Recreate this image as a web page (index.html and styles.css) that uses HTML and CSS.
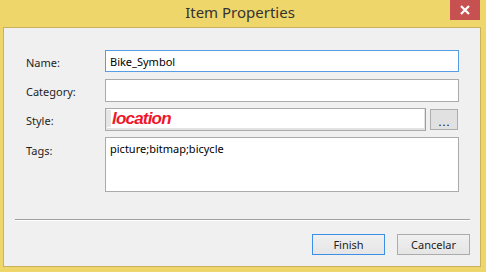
FILE: index.html
```html
<!DOCTYPE html>
<html>
<head>
<meta charset="utf-8">
<link rel="stylesheet" href="styles.css">
</head>
<body>
<div class="window">
  <div class="titlebar">
    <div class="title">Item Properties</div>
    <div class="close">
      <svg width="12" height="10" viewBox="0 0 12 10"><path d="M2 1 L10 9 M10 1 L2 9" stroke="#fff" stroke-width="2.2" fill="none"/></svg>
    </div>
  </div>
  <div class="client">
    <div class="form">
      <label class="lbl">Name:</label>
      <div class="field focus">Bike_Symbol</div>
      <label class="lbl">Category:</label>
      <div class="field"></div>
      <label class="lbl">Style:</label>
      <div class="style-row">
        <div class="style-box"><div class="style-inner"><span class="caret"></span><span class="loc">location</span></div></div>
        <button class="dots">...</button>
      </div>
      <label class="lbl lbl-top">Tags:</label>
      <div class="field area">picture;bitmap;bicycle</div>
    </div>
    <div class="sep"></div>
    <div class="buttons">
      <button class="btn default">Finish</button>
      <button class="btn">Cancelar</button>
    </div>
  </div>
</div>
</body>
</html>
```
FILE: styles.css
```css
* { box-sizing: border-box; }
html, body { margin: 0; padding: 0; }
body {
  width: 486px;
  height: 272px;
  background: #efd66a;
  font-family: "Noto Sans", "Open Sans", sans-serif;
  font-size: 11px;
  color: #1e1e1e;
  overflow: hidden;
}
.window {
  display: flex;
  flex-direction: column;
  height: 272px;
  padding: 0 5px 5px 3px;
}
.titlebar {
  height: 27px;
  display: flex;
  position: relative;
  justify-content: center;
}
.title {
  font-family: "Noto Sans", sans-serif;
  font-size: 15px;
  color: #333;
  line-height: 25px;
  margin-left: -4px;
}
.close {
  position: absolute;
  top: 0;
  right: 1px;
  width: 30px;
  height: 20px;
  background: #c75050;
  display: flex;
  align-items: center;
  justify-content: center;
}
.client {
  flex: 1;
  background: #f0f0f0;
  border: 1px solid #c9b25c;
  display: flex;
  flex-direction: column;
}
.form {
  display: grid;
  grid-template-columns: 79px 354px;
  grid-template-rows: 23px 23px 23px 55px;
  row-gap: 6px;
  margin: 22px 0 0 22px;
}
.form > .field:first-of-type { margin-bottom: 1px; }
.lbl {
  display: flex;
  align-items: center;
  padding-top: 2px;
}
.lbl-top { align-items: flex-start; padding-top: 6px; }
.field {
  background: #fff;
  border: 1px solid #ababab;
  padding: 0 0 0 4px;
  display: flex;
  align-items: center;
  color: #000;
}
.field.focus { border-color: #569de5; }
.field.area { align-items: flex-start; padding-top: 3px; }
.style-row {
  display: flex;
  gap: 4px;
  align-items: flex-start;
}
.style-box {
  width: 321px;
  height: 23px;
  border: 1px solid #ababab;
  border-right-color: #9c9c9c;
  background: #e3e3e3;
  padding: 0 1px 2px 1px;
}
.style-inner {
  height: 100%;
  background: #fff;
  display: flex;
  align-items: center;
}
.caret {
  width: 4px;
  height: 17px;
  background: #e6e6e6;
  margin-right: 1px;
}
.loc {
  font-family: "Liberation Sans", Arial, sans-serif;
  font-weight: bold;
  font-style: italic;
  font-size: 17px;
  letter-spacing: -0.8px;
  color: #f0162a;
  line-height: 18px;
}
.dots {
  margin-top: 1px;
  width: 28px;
  height: 21px;
  border: 1px solid #adadad;
  background: #e1e1e1;
  font-family: "Noto Sans", sans-serif;
  font-size: 11px;
  font-weight: normal;
  letter-spacing: 1px;
  padding: 4px 0 0 1px;
  color: #000;
}
.sep {
  margin: 27px 10px 0 11px;
  height: 2px;
  border-top: 1px solid #a0a0a0;
  border-bottom: 1px solid #fff;
}
.buttons {
  display: flex;
  justify-content: flex-end;
  gap: 12px;
  margin: 13px 10px 0 0;
}
.btn {
  width: 73px;
  height: 21px;
  border: 1px solid #acacac;
  background: linear-gradient(#f0f0f0, #e5e5e5);
  font-family: "Noto Sans", sans-serif;
  font-size: 11px;
  color: #1e1e1e;
  padding: 0;
}
.btn.default { border-color: #3c8fe6; }
```
